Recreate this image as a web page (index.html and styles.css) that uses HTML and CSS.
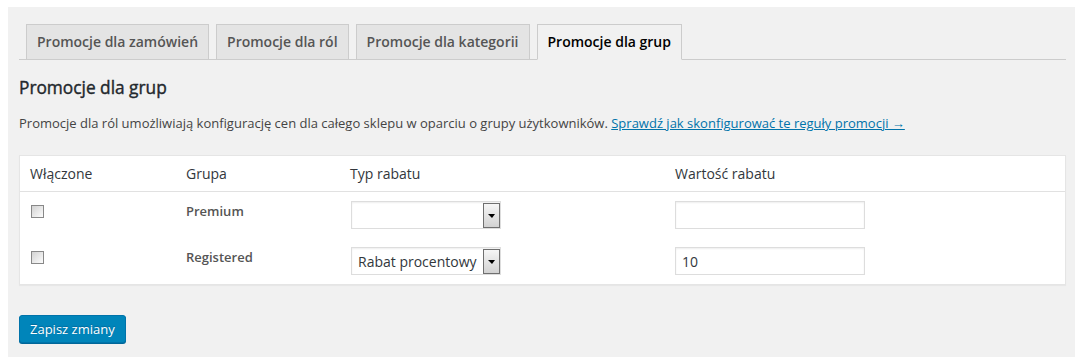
FILE: index.html
```html
<!DOCTYPE html>
<html lang="pl">
<head>
    <meta charset="UTF-8">
    <meta name="viewport" content="width=device-width, initial-scale=1.0">
    <title>Promocje dla grup</title>
    <link rel="stylesheet" href="styles.css">
</head>
<body>

    <div class="window">
        <nav class="nav-tabs">
            <a class="nav-tab" href="#">Promocje dla zamówień</a>
            <a class="nav-tab" href="#">Promocje dla ról</a>
            <a class="nav-tab" href="#">Promocje dla kategorii</a>
            <a class="nav-tab nav-tab-active" href="#">Promocje dla grup</a>
        </nav>

        <h2>Promocje dla grup</h2>
        <p class="description">Promocje dla ról umożliwiają konfigurację cen dla całego sklepu w oparciu o grupy użytkowników. <a href="#">Sprawdź jak skonfigurować te reguły promocji →</a></p>

        <table class="groups">
            <colgroup>
                <col class="col-enabled">
                <col class="col-group">
                <col class="col-type">
                <col class="col-value">
            </colgroup>
            <thead>
                <tr>
                    <th>Włączone</th>
                    <th>Grupa</th>
                    <th>Typ rabatu</th>
                    <th>Wartość rabatu</th>
                </tr>
            </thead>
            <tbody>
                <tr>
                    <td><input type="checkbox" class="check"></td>
                    <td class="group-name">Premium</td>
                    <td>
                        <div class="select-wrap">
                            <select>
                                <option></option>
                                <option>Rabat procentowy</option>
                                <option>Rabat kwotowy</option>
                            </select>
                            <span class="select-btn"></span>
                        </div>
                    </td>
                    <td><input type="text" class="value"></td>
                </tr>
                <tr>
                    <td><input type="checkbox" class="check"></td>
                    <td class="group-name">Registered</td>
                    <td>
                        <div class="select-wrap">
                            <select>
                                <option></option>
                                <option selected>Rabat procentowy</option>
                                <option>Rabat kwotowy</option>
                            </select>
                            <span class="select-btn"></span>
                        </div>
                    </td>
                    <td><input type="text" class="value" value="10"></td>
                </tr>
            </tbody>
        </table>

        <button type="submit" class="button-primary">Zapisz zmiany</button>
    </div>

</body>
</html>
```

FILE: styles.css
```css
body {
    margin: 7px 8px;
    background: #fff;
    font-family: "Open Sans", "Liberation Sans", sans-serif;
    font-size: 13px;
    color: #444;
}
.window {
    width: 1067px;
    height: 350px;
    box-sizing: border-box;
    padding: 17px 9px 0 11px;
    background: #f1f1f1;
    box-shadow: 2px 2px 5px rgba(0, 0, 0, 0.45), 0 0 3px rgba(0, 0, 0, 0.25);
}
.nav-tabs {
    display: flex;
    align-items: flex-end;
    border-bottom: 1px solid #ccc;
}
.nav-tab {
    margin-left: 7px;
    padding: 5px 10px;
    border: 1px solid #ccc;
    border-bottom: none;
    background: #e4e4e4;
    color: #555;
    font-size: 14px;
    font-weight: 600;
    line-height: 24px;
    text-decoration: none;
    white-space: nowrap;
}
.nav-tab-active {
    background: #f1f1f1;
    color: #000;
    border-bottom: 1px solid #f1f1f1;
    margin-bottom: -1px;
}
h2 {
    margin: 16px 0 0;
    font-size: 17.3px;
    font-weight: 400;
    line-height: 24px;
    color: #23282d;
    -webkit-text-stroke: 0.4px #23282d;
}
.description {
    margin: 13px 0 0;
    line-height: 20px;
}
.description a {
    color: #0073aa;
}
.groups {
    width: 100%;
    margin-top: 22px;
    table-layout: fixed;
    border-spacing: 0;
    background: #fff;
    border: 1px solid #e5e5e5;
    box-shadow: 0 1px 1px rgba(0, 0, 0, 0.04);
}
.col-enabled { width: 156px; }
.col-group { width: 164px; }
.col-type { width: 325px; }
.groups th {
    padding: 8px 10px;
    text-align: left;
    font-size: 14px;
    font-weight: 400;
    line-height: 19px;
    color: #32373c;
    border-bottom: 1px solid #e1e1e1;
}
.groups td {
    padding: 9px 10px;
    vertical-align: top;
    line-height: 20px;
    height: 28px;
}
.group-name {
    font-weight: 600;
    color: #555;
}
.check {
    -webkit-appearance: none;
    appearance: none;
    display: block;
    width: 13px;
    height: 13px;
    margin: 4px 0 0 1px;
    border: 1px solid #888;
    background: linear-gradient(135deg, #d2d2d2, #fcfcfc);
}
.select-wrap {
    position: relative;
    width: 150px;
    height: 28px;
    margin-left: 1px;
}
.select-wrap select {
    -webkit-appearance: none;
    appearance: none;
    width: 100%;
    height: 28px;
    box-sizing: border-box;
    padding: 0 6px;
    border: 1px solid #ddd;
    border-radius: 0;
    background: #fff;
    font-family: "Open Sans", "Liberation Sans", sans-serif;
    font-size: 14px;
    color: #32373c;
    box-shadow: inset 0 1px 2px rgba(0, 0, 0, 0.07);
}
.select-btn {
    position: absolute;
    top: 2px;
    right: 1px;
    width: 15px;
    height: 23px;
    border: 1px solid #6f6f6f;
    background: linear-gradient(#f6f6f6, #d2d2d2);
    pointer-events: none;
}
.select-btn::after {
    content: "";
    position: absolute;
    left: 4px;
    top: 10px;
    border-left: 4px solid transparent;
    border-right: 3px solid transparent;
    border-top: 4px solid #000;
}
.value {
    display: block;
    width: 190px;
    height: 28px;
    box-sizing: border-box;
    margin: 0;
    padding: 0 6px;
    border: 1px solid #ddd;
    font-family: "Open Sans", "Liberation Sans", sans-serif;
    font-size: 14px;
    color: #32373c;
    box-shadow: inset 0 1px 2px rgba(0, 0, 0, 0.07);
}
.button-primary {
    display: block;
    margin-top: 30px;
    height: 28px;
    padding: 0 10px 1px;
    border: 1px solid #0073aa;
    border-radius: 3px;
    background: #0085ba;
    box-shadow: 0 1px 0 #006799;
    color: #fff;
    font-family: "Open Sans", "Liberation Sans", sans-serif;
    font-size: 13px;
    line-height: 26px;
    text-shadow: 0 -1px 1px #006799;
    cursor: pointer;
}
```
